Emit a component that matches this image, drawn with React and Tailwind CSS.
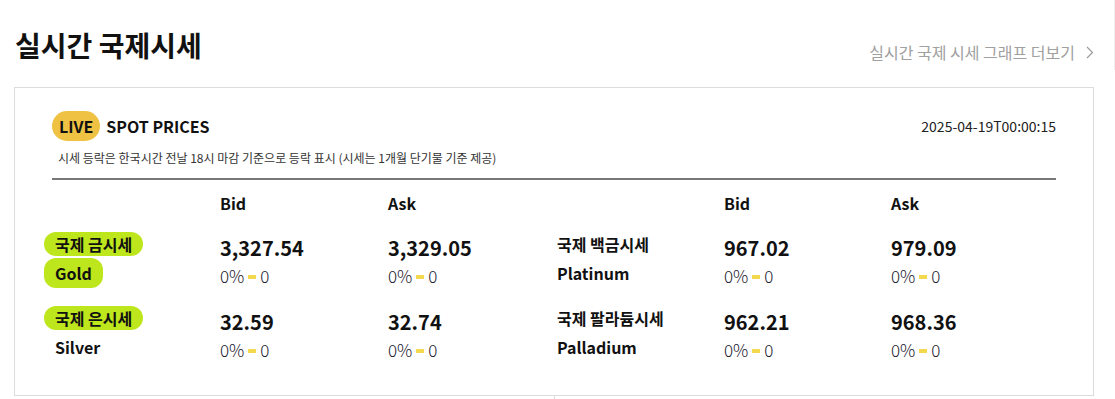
import React from "react";

const rows = [
  [
    { ko: "국제 금시세", en: "Gold", hlKo: true, hlEn: true, bid: "3,327.54", ask: "3,329.05" },
    { ko: "국제 백금시세", en: "Platinum", bid: "967.02", ask: "979.09" },
  ],
  [
    { ko: "국제 은시세", en: "Silver", hlKo: true, bid: "32.59", ask: "32.74" },
    { ko: "국제 팔라듐시세", en: "Palladium", bid: "962.21", ask: "968.36" },
  ],
];

function Hl({ on, children, className }) {
  return (
    <span className={"relative inline-block " + className}>
      {on && (
        <span className="absolute left-[-11px] right-[-11px] top-[-1px] bottom-[-1px] rounded-[12px] bg-[#bde61c]" />
      )}
      <span className="relative">{children}</span>
    </span>
  );
}

function Change() {
  return (
    <div className="flex items-center text-[17px] leading-[26px] font-light text-[#1a1a2e]">
      <span>0%</span>
      <span className="mx-[4px] mt-[2px] h-[4px] w-[8px] bg-[#f2d94e]" />
      <span>0</span>
    </div>
  );
}

function Value({ v }) {
  return (
    <div>
      <div className="text-[20px] leading-[30px] font-bold text-[#111]">{v}</div>
      <Change />
    </div>
  );
}

function Label({ m }) {
  return (
    <div className="pl-[3px]">
      <div className="leading-[22px]">
        <Hl on={m.hlKo} className="text-[16px] font-bold text-[#111]">{m.ko}</Hl>
      </div>
      <div className="mt-[4px] leading-[28px]">
        <Hl on={m.hlEn} className="text-[16px] font-bold text-[#111]">{m.en}</Hl>
      </div>
    </div>
  );
}

export default function App() {
  return (
    <div
      className="flex h-[399px] w-[1115px] overflow-hidden bg-white"
      style={{ fontFamily: '"Noto Sans CJK KR", "Noto Sans", sans-serif' }}
    >
      <div className="w-[1114px]">
        <div className="flex items-end justify-between pl-[15px] pr-[20px] pt-[25px]">
          <h1 className="text-[28px] leading-[40px] font-bold text-[#111]">실시간 국제시세</h1>
          <div className="flex items-center gap-[11px] pb-[2px] text-[16px] leading-[22px] text-[#a0a0a0]">
            <span>실시간 국제 시세 그래프 더보기</span>
            <svg width="8" height="13" viewBox="0 0 8 13" fill="none">
              <path d="M1 1l5.5 5.5L1 12" stroke="#9a9a9a" strokeWidth="1.2" />
            </svg>
          </div>
        </div>

        <div className="ml-[14px] mt-[22px] h-[309px] w-[1080px] border border-[#dcdcdc] px-[37px] pt-[23px]">
          <div className="flex items-center justify-between">
            <div className="flex items-center">
              <span className="flex h-[30px] items-center rounded-full bg-[#f0c244] px-[7px] text-[16px] font-bold text-[#111]">
                LIVE
              </span>
              <span className="ml-[6px] text-[16px] font-bold text-[#111]">SPOT PRICES</span>
            </div>
            <span className="text-[14px] text-[#222]">2025-04-19T00:00:15</span>
          </div>
          <div className="ml-[6px] mt-[8px] text-[12px] leading-[18px] text-[#333]">
            시세 등락은 한국시간 전날 18시 마감 기준으로 등락 표시 (시세는 1개월 단기물 기준 제공)
          </div>
          <div className="mt-[11px] h-[2px] bg-[#777]" />

          <div className="mt-[11px] grid grid-cols-[168px_168px_166px_170px_167px_1fr] text-[16px] leading-[24px] font-bold text-[#111]">
            <div />
            <div>Bid</div>
            <div>Ask</div>
            <div />
            <div>Bid</div>
            <div>Ask</div>
          </div>

          <div className="mt-[18px] flex flex-col gap-[18px]">
            {rows.map((row, i) => (
              <div key={i} className="grid grid-cols-[168px_168px_166px_170px_167px_1fr]">
                {row.map((m) => (
                  <React.Fragment key={m.en}>
                    <Label m={m} />
                    <Value v={m.bid} />
                    <Value v={m.ask} />
                  </React.Fragment>
                ))}
              </div>
            ))}
          </div>
        </div>
        <div className="ml-[554px] h-[4px] w-px bg-[#dcdcdc]" />
      </div>
      <div className="w-px">
        <div className="h-[70px] w-px bg-[#eeeeee]" />
      </div>
    </div>
  );
}
